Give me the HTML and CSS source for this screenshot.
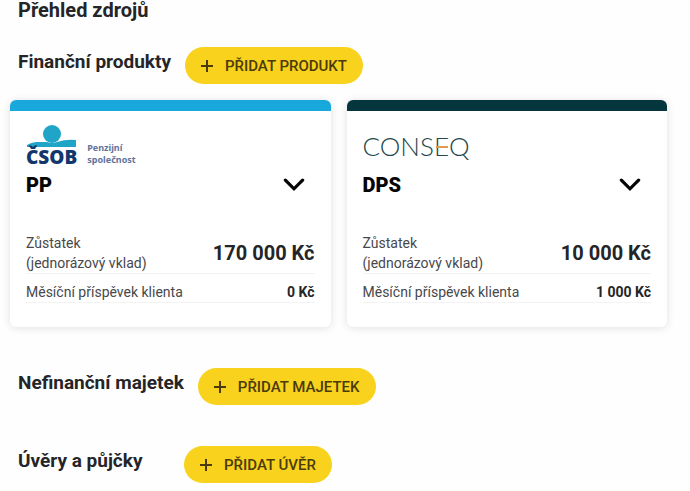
FILE: index.html
```html
<!DOCTYPE html>
<html lang="cs">
<head>
    <meta charset="UTF-8">
    <meta name="viewport" content="width=device-width, initial-scale=1.0">
    <title>Přehled zdrojů</title>
    <link rel="stylesheet" href="styles.css">
</head>
<body>
    <main class="page">
        <h1>Přehled zdrojů</h1>

        <section class="products">
            <div class="section-head">
                <h2>Finanční produkty</h2>
                <button class="add-button" type="button">
                    <svg class="plus" viewBox="0 0 12 12" aria-hidden="true"><path d="M6 0v12M0 6h12"/></svg>
                    PŘIDAT PRODUKT
                </button>
            </div>

            <div class="cards">
                <article class="card card-csob">
                    <div class="logo csob">
                        <div class="csob-mark">
                            <svg class="csob-symbol" viewBox="0 0 51 23" aria-hidden="true">
                                <path d="M1 20C7 16 14 17 21 17Q26 19 31 17Q40 14 50 15V22H1Z"/>
                                <circle cx="26" cy="9" r="9"/>
                            </svg>
                            <span class="csob-name">ČSOB</span>
                        </div>
                        <div class="csob-unit">
                            <div>Penzijní</div>
                            <div>společnost</div>
                        </div>
                    </div>
                    <div class="card-title">
                        <h3>PP</h3>
                        <button class="toggle" type="button" aria-label="Rozbalit PP">
                            <svg viewBox="0 0 20 13" aria-hidden="true"><path d="M2 2l8 8 8-8"/></svg>
                        </button>
                    </div>
                    <dl class="values">
                        <div class="row balance">
                            <dt>Zůstatek<br>(jednorázový vklad)</dt>
                            <dd>170 000 Kč</dd>
                        </div>
                        <div class="row">
                            <dt>Měsíční příspěvek klienta</dt>
                            <dd>0 Kč</dd>
                        </div>
                    </dl>
                </article>

                <article class="card card-conseq">
                    <div class="logo conseq">
                        <span>CONS<span class="conseq-e">E</span>Q</span>
                    </div>
                    <div class="card-title">
                        <h3>DPS</h3>
                        <button class="toggle" type="button" aria-label="Rozbalit DPS">
                            <svg viewBox="0 0 20 13" aria-hidden="true"><path d="M2 2l8 8 8-8"/></svg>
                        </button>
                    </div>
                    <dl class="values">
                        <div class="row balance">
                            <dt>Zůstatek<br>(jednorázový vklad)</dt>
                            <dd>10 000 Kč</dd>
                        </div>
                        <div class="row">
                            <dt>Měsíční příspěvek klienta</dt>
                            <dd>1 000 Kč</dd>
                        </div>
                    </dl>
                </article>
            </div>
        </section>

        <section class="section-head">
            <h2>Nefinanční majetek</h2>
            <button class="add-button" type="button">
                <svg class="plus" viewBox="0 0 12 12" aria-hidden="true"><path d="M6 0v12M0 6h12"/></svg>
                PŘIDAT MAJETEK
            </button>
        </section>

        <section class="section-head">
            <h2>Úvěry a půjčky</h2>
            <button class="add-button" type="button">
                <svg class="plus" viewBox="0 0 12 12" aria-hidden="true"><path d="M6 0v12M0 6h12"/></svg>
                PŘIDAT ÚVĚR
            </button>
        </section>
    </main>
</body>
</html>
```
FILE: styles.css
```css
* {
    margin: 0;
    padding: 0;
    box-sizing: border-box;
}

body {
    background: #fefefe;
    color: #252528;
    font-family: Roboto, sans-serif;
}

.page {
    display: flex;
    flex-direction: column;
    gap: 41px;
    padding: 0 23px 8px 10px;
}

h1,
h2 {
    font-size: 19px;
    line-height: 21px;
    font-weight: 700;
}

h1 {
    padding-left: 8px;
    margin-bottom: -15px;
    font-size: 20px;
}

.section-head {
    display: flex;
    align-items: center;
    gap: 14px;
    padding-left: 8px;
}

.section-head h2 {
    min-width: 152px;
    padding-bottom: 8px;
}

.add-button {
    display: flex;
    align-items: center;
    gap: 12px;
    height: 37px;
    padding: 1px 16px 0;
    border: none;
    border-radius: 19px;
    background: #f8d21c;
    color: #4b3b0c;
    font-family: inherit;
    font-size: 15px;
    font-weight: 500;
    cursor: pointer;
}

.plus {
    width: 12px;
    height: 12px;
    stroke: #4b3b0c;
    stroke-width: 2;
}

.cards {
    display: grid;
    grid-template-columns: 1fr 1fr;
    gap: 16px;
    margin-top: 16px;
}

.card {
    padding: 12px 16px 24px;
    border-top: 11px solid;
    border-radius: 6px;
    background: #fff;
    box-shadow: 0 1px 8px rgba(0, 0, 0, 0.12);
}

.card-csob {
    border-top-color: #18a8db;
}

.card-conseq {
    border-top-color: #05363d;
}

.logo {
    display: flex;
    height: 46px;
}

.csob {
    align-items: flex-end;
    gap: 10px;
    padding-bottom: 3px;
    font-family: "Noto Sans", sans-serif;
}

.csob-mark {
    display: flex;
    flex-direction: column;
    align-items: center;
}

.csob-symbol {
    width: 51px;
    height: 23px;
    fill: #20a5c8;
}

.csob-name {
    color: #12376c;
    font-size: 19px;
    font-weight: 900;
    line-height: 18px;
}

.csob-unit {
    color: #61739b;
    font-size: 9px;
    font-weight: 700;
    line-height: 12px;
}

.conseq {
    align-items: center;
    color: #24474d;
    font-family: Lato, sans-serif;
    font-size: 26px;
    font-weight: 300;
    line-height: 40px;
}

.conseq-e {
    position: relative;
}

/* orange middle bar of the E */
.conseq-e::after {
    content: "";
    position: absolute;
    left: 2px;
    right: 1px;
    top: 50%;
    height: 2px;
    background: #e29a4c;
}

.card-title {
    display: flex;
    align-items: center;
    justify-content: space-between;
    padding-right: 10px;
    color: #050505;
}

.card-title h3 {
    font-size: 20px;
    font-weight: 900;
    line-height: 32px;
}

.toggle {
    display: flex;
    border: none;
    background: none;
    cursor: pointer;
}

.toggle svg {
    width: 22px;
    height: 14px;
    fill: none;
    stroke: #050505;
    stroke-width: 3;
    stroke-linecap: round;
}

.values {
    margin-top: 32px;
}

.row {
    display: flex;
    align-items: center;
    justify-content: space-between;
    padding-top: 8px;
    border-bottom: 1px solid #f3f3f3;
    font-size: 14px;
    line-height: 20px;
}

.balance {
    padding: 0;
}

.row dt {
    color: #48484b;
}

.row dd {
    font-weight: 700;
}

.balance dd {
    font-size: 20px;
}
```
